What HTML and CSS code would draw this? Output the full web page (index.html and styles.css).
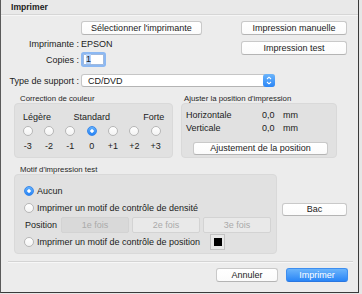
FILE: index.html
```html
<!DOCTYPE html>
<html lang="fr">
<head>
    <meta charset="UTF-8">
    <title>Imprimer</title>
    <link rel="stylesheet" href="styles.css">
</head>
<body>
    <div class="window">
        <div class="titlebar">Imprimer</div>

        <div class="top">
            <div class="printer-info">
                <div class="row row-select">
                    <span class="label"></span>
                    <button class="btn btn-select">Sélectionner l'imprimante</button>
                </div>
                <div class="row row-printer">
                    <span class="label">Imprimante :</span>
                    <span>EPSON</span>
                </div>
                <div class="row row-copies">
                    <span class="label">Copies :</span>
                    <div class="copies"><span class="sel">1</span></div>
                </div>
            </div>
            <div class="side-buttons">
                <button class="btn">Impression manuelle</button>
                <button class="btn">Impression test</button>
            </div>
        </div>

        <div class="row row-media">
            <span class="label">Type de support :</span>
            <div class="select">
                <span>CD/DVD</span>
                <span class="stepper">
                    <svg width="12" height="13" viewBox="0 0 12 13">
                        <path d="M4 5 L6 3.2 L8 5" fill="none" stroke="#fff" stroke-width="1.1"/>
                        <path d="M4 8 L6 9.8 L8 8" fill="none" stroke="#fff" stroke-width="1.1"/>
                    </svg>
                </span>
            </div>
        </div>

        <div class="groups">
            <div class="group">
                <div class="group-title">Correction de couleur</div>
                <div class="group-box box-color">
                    <div class="scale-row scale-labels">
                        <span class="lbl-low">Légère</span>
                        <span class="lbl-mid">Standard</span>
                        <span class="lbl-high">Forte</span>
                    </div>
                    <div class="scale-row scale-radios">
                        <span class="radio"></span>
                        <span class="radio"></span>
                        <span class="radio"></span>
                        <span class="radio on"></span>
                        <span class="radio"></span>
                        <span class="radio"></span>
                        <span class="radio"></span>
                    </div>
                    <div class="scale-row scale-values">
                        <span>-3</span><span>-2</span><span>-1</span><span>0</span><span>+1</span><span>+2</span><span>+3</span>
                    </div>
                </div>
            </div>
            <div class="group">
                <div class="group-title title-pos">Ajuster la position d'impression</div>
                <div class="group-box box-pos">
                    <div class="pos-grid">
                        <span>Horizontale</span><span>0,0</span><span>mm</span>
                        <span>Verticale</span><span>0,0</span><span>mm</span>
                    </div>
                    <button class="btn btn-adjust">Ajustement de la position</button>
                </div>
            </div>
        </div>

        <div class="test-section">
            <div class="group">
                <div class="group-title">Motif d'impression test</div>
                <div class="group-box box-test">
                    <div class="opt opt-first">
                        <span class="radio on"></span>
                        <span>Aucun</span>
                    </div>
                    <div class="opt">
                        <span class="radio"></span>
                        <span>Imprimer un motif de contrôle de densité</span>
                    </div>
                    <div class="position-row">
                        <span class="pos-label">Position</span>
                        <span class="seg seg-active">1e fois</span>
                        <span class="seg">2e fois</span>
                        <span class="seg">3e fois</span>
                    </div>
                    <div class="opt opt-last">
                        <span class="radio"></span>
                        <span class="opt-text">Imprimer un motif de contrôle de position</span>
                        <span class="swatch"><span></span></span>
                    </div>
                </div>
            </div>
            <button class="btn btn-tray">Bac</button>
        </div>

        <div class="separator"></div>

        <div class="footer">
            <button class="btn btn-footer">Annuler</button>
            <button class="btn btn-footer btn-primary">Imprimer</button>
        </div>
    </div>
</body>
</html>
```

FILE: styles.css
```css
body {
    margin: 0;
    background-color: #e6e6e6;
    font-family: "Liberation Sans", Arial, sans-serif;
    font-size: 9px;
    color: #1b1b1b;
}
.window {
    box-sizing: border-box;
    width: 359px;
    height: 293px;
    background-color: #ececec;
    border-left: 1px solid #5a5a5a;
    border-right: 1px solid #3a3a3a;
    border-bottom: 1px solid #3a3a3a;
    overflow: hidden;
}
.titlebar {
    height: 14px;
    line-height: 14px;
    padding-left: 10px;
    font-weight: bold;
    font-size: 8.6px;
    background-color: #e9e9e9;
    border-bottom: 1px solid #d6d6d6;
    box-shadow: 0 1px 0 #f6f6f6;
}

/* boutons */
.btn {
    box-sizing: border-box;
    display: block;
    padding: 0;
    background: linear-gradient(#ffffff, #fbfbfb);
    border: 1px solid #c9c9c9;
    border-bottom-color: #b4b4b4;
    border-radius: 3px;
    font-family: inherit;
    font-size: 9px;
    color: #1b1b1b;
    text-align: center;
    line-height: 12px;
    height: 14px;
}
.btn-primary {
    background: linear-gradient(#6bb4fb, #2a86f7);
    border-color: #3d8ef0;
    border-bottom-color: #2a77e0;
    color: #fff;
}

/* haut */
.top {
    display: flex;
    margin-top: 6px;
    height: 46px;
}
.printer-info {
    width: 240px;
}
.row {
    display: flex;
    align-items: center;
}
.label {
    flex: none;
    width: 78px;
    margin-right: 2px;
    text-align: right;
}
.btn-select {
    width: 121px;
}
.row-select {
    height: 14px;
}
.row-printer {
    height: 14px;
    margin-top: 2px;
}
.row-copies {
    height: 15px;
    margin-top: 1px;
}
.copies {
    box-sizing: border-box;
    width: 21px;
    height: 11px;
    margin: 2px;
    background: #fff;
    border: 1px solid #9fb9de;
    box-shadow: 0 0 0 2px #8cb8f2;
    border-radius: 1px;
    line-height: 9px;
    padding-left: 2px;
}
.sel {
    background-color: #b4d3fb;
}
.side-buttons {
    display: flex;
    flex-direction: column;
    gap: 6px;
    width: 106px;
}

/* type de support */
.row-media {
    margin-top: 7px;
    height: 13px;
}
.select {
    box-sizing: border-box;
    display: flex;
    align-items: center;
    width: 194px;
    height: 13px;
    padding-left: 6px;
    background: #fff;
    border: 1px solid #c6c6c6;
    border-bottom-color: #b4b4b4;
    border-radius: 3px;
}
.stepper {
    display: block;
    margin-left: auto;
    margin-right: -1px;
    width: 12px;
    height: 13px;
    border-radius: 3px;
    background: linear-gradient(#6bb4fb, #2a86f7);
}
.stepper svg {
    display: block;
}

/* groupes */
.groups {
    display: flex;
    gap: 8px;
    margin-top: 7px;
    padding-left: 13px;
}
.group-title {
    font-size: 7.8px;
    line-height: 9px;
    height: 9px;
    padding-left: 6px;
    color: #262626;
}
.title-pos {
    padding-left: 3px;
}
.group-box {
    box-sizing: border-box;
    background-color: #e1e1e1;
    border: 1px solid #d9d9d9;
    border-radius: 4px;
}
.box-color {
    width: 159px;
    height: 55px;
    padding: 7px 0 0 2px;
}
.scale-row {
    display: grid;
    grid-template-columns: repeat(7, 21.33px);
    align-items: center;
}
.scale-labels {
    height: 12px;
}
.lbl-low {
    grid-column: 1 / span 2;
    margin-left: 6px;
}
.lbl-mid {
    grid-column: 4;
    justify-self: center;
    white-space: nowrap;
}
.lbl-high {
    grid-column: 6 / span 2;
    justify-self: end;
    margin-right: 2px;
}
.scale-radios {
    margin-top: 3px;
    height: 10px;
    justify-items: center;
}
.scale-values {
    margin-top: 5px;
    height: 10px;
    justify-items: center;
}
.radio {
    box-sizing: border-box;
    display: block;
    flex: none;
    width: 10px;
    height: 10px;
    border-radius: 50%;
    background: linear-gradient(#ffffff, #f3f3f3);
    border: 1px solid #b7b7b7;
}
.radio.on {
    background: radial-gradient(circle, #fff 0 1.4px, transparent 2px), linear-gradient(#66b1fb, #2683f6);
    border-color: #3a89ea;
}
.box-pos {
    width: 156px;
    height: 55px;
    padding: 6px 0 0 4px;
}
.pos-grid {
    display: grid;
    grid-template-columns: 76px 21px auto;
    grid-auto-rows: 10px;
    row-gap: 3px;
    line-height: 10px;
}
.btn-adjust {
    width: 135px;
    height: 13px;
    line-height: 11px;
    margin: 9px 0 0 7px;
}

/* motif d'impression test */
.test-section {
    display: flex;
    align-items: flex-start;
    margin-top: 7px;
    padding-left: 13px;
}
.box-test {
    width: 263px;
    height: 80px;
    padding: 11px 0 0 9px;
}
.opt {
    display: flex;
    align-items: center;
    gap: 3px;
    height: 10px;
}
.opt + .opt {
    margin-top: 7px;
}
.position-row {
    display: flex;
    align-items: center;
    gap: 3px;
    height: 16px;
    margin-top: 4px;
    padding-left: 1px;
}
.pos-label {
    width: 33px;
}
.seg {
    box-sizing: border-box;
    width: 68px;
    height: 16px;
    line-height: 14px;
    text-align: center;
    color: #aaaaaa;
    background-color: #e9e9e9;
    border: 1px solid #d3d3d3;
    border-radius: 2px;
}
.seg-active {
    background-color: #d9d9d9;
}
.position-row + .opt {
    margin-top: 1px;
    height: 16px;
}
.opt-text {
    width: 170px;
    flex: none;
}
.swatch {
    box-sizing: border-box;
    display: flex;
    align-items: center;
    justify-content: center;
    width: 15px;
    height: 16px;
    background-color: #e8e8e8;
    border: 1px solid #c2c2c2;
}
.swatch span {
    width: 8px;
    height: 8px;
    background-color: #000;
}
.btn-tray {
    width: 65px;
    height: 13px;
    line-height: 11px;
    margin: 38px 0 0 5px;
}

/* bas */
.separator {
    margin: 7px 5px 0 7px;
    border-top: 1px solid #d4d4d4;
    border-bottom: 1px solid #f7f7f7;
}
.footer {
    display: flex;
    justify-content: flex-end;
    gap: 8px;
    margin-top: 5px;
    padding-right: 10px;
}
.btn-footer {
    width: 62px;
    height: 14px;
}
```
